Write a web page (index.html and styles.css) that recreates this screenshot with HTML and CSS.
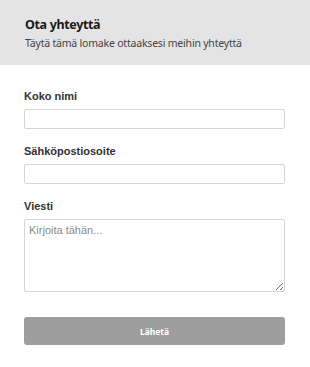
FILE: index.html
```html
<!DOCTYPE html>
<html lang="fi">
<head>
<meta charset="utf-8">
<link rel="stylesheet" href="styles.css">
</head>
<body>
<header class="head">
  <h1 class="title">Ota yhteyttä</h1>
  <p class="subtitle">Täytä tämä lomake ottaaksesi meihin yhteyttä</p>
</header>
<form class="form">
  <div class="field">
    <label class="label" for="name">Koko nimi</label>
    <input class="input" id="name" type="text">
  </div>
  <div class="field">
    <label class="label" for="email">Sähköpostiosoite</label>
    <input class="input" id="email" type="email">
  </div>
  <div class="field">
    <label class="label" for="msg">Viesti</label>
    <textarea class="textarea" id="msg" placeholder="Kirjoita tähän..."></textarea>
  </div>
  <button class="submit" type="button">Lähetä</button>
</form>
</body>
</html>
```
FILE: styles.css
```css
* { box-sizing: border-box; }
html, body { margin: 0; padding: 0; background: #fff; }
body { width: 310px; }
.head {
  background: #e4e4e4;
  padding: 16px 25px 17px;
  height: 65px;
}
.title {
  margin: 0;
  font-family: "Noto Sans", sans-serif;
  font-weight: 700;
  font-size: 12.5px;
  letter-spacing: -0.35px;
  line-height: 18px;
  color: #1a1a1a;
}
.subtitle {
  margin: 2px 0 0;
  font-family: "Noto Sans", sans-serif;
  font-size: 10.5px;
  letter-spacing: -0.2px;
  line-height: 14px;
  color: #444;
}
.form {
  padding: 25px 24px 20px 24px;
  display: flex;
  flex-direction: column;
}
.field {
  display: flex;
  flex-direction: column;
  margin-bottom: 16px;
}
.label {
  font-family: "Liberation Sans", Arial, sans-serif;
  font-weight: 700;
  font-size: 11px;
  line-height: 13px;
  color: #333;
  margin-bottom: 6px;
}
.input {
  width: 261px;
  height: 20px;
  border: 1px solid #d6d6d6;
  border-radius: 2px;
  background: #fff;
  font-family: "Liberation Sans", Arial, sans-serif;
  font-size: 11px;
  padding: 2px 5px;
  outline: none;
}
.textarea {
  width: 261px;
  height: 73px;
  border: 1px solid #d6d6d6;
  border-radius: 2px;
  font-family: "Liberation Sans", Arial, sans-serif;
  font-size: 11px;
  padding: 4px 4px;
  resize: vertical;
  outline: none;
}
.textarea::placeholder { color: #8a8a8a; }
.submit {
  margin-top: 9px;
  width: 261px;
  height: 28px;
  border: none;
  border-radius: 3px;
  background: #9e9e9e;
  color: #fff;
  font-family: "Noto Sans", sans-serif;
  font-weight: 700;
  font-size: 8.5px;
}
```
